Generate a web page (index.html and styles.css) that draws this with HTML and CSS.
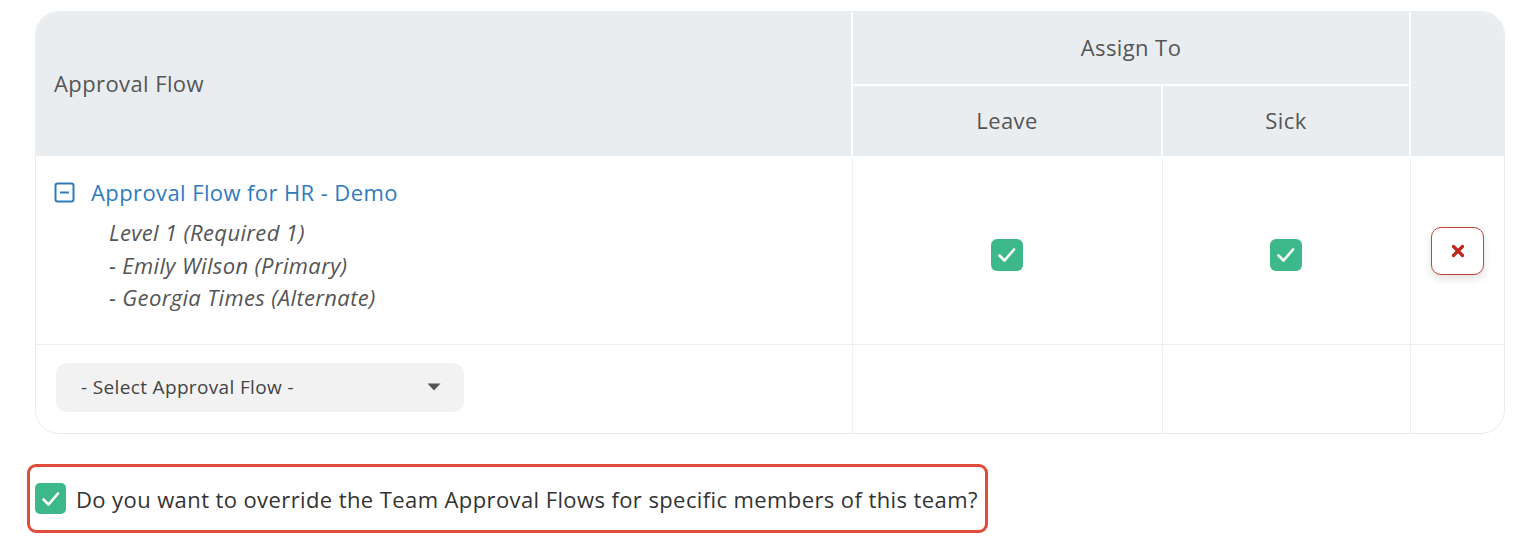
FILE: index.html
```html
<!DOCTYPE html>
<html>
<head>
<meta charset="utf-8">
<link rel="stylesheet" href="styles.css">
</head>
<body>
<div class="page">
  <div class="card">
    <table class="grid">
      <colgroup>
        <col class="c-flow">
        <col class="c-leave">
        <col class="c-sick">
        <col class="c-act">
      </colgroup>
      <thead>
        <tr class="h1">
          <th class="th-flow" rowspan="2">Approval Flow</th>
          <th class="th-assign" colspan="2">Assign To</th>
          <th class="th-act" rowspan="2"></th>
        </tr>
        <tr class="h2">
          <th class="th-leave">Leave</th>
          <th class="th-sick">Sick</th>
        </tr>
      </thead>
      <tbody>
        <tr class="row-flow">
          <td class="cell-flow">
            <div class="flow-title">
              <svg class="minus" width="21" height="21" viewBox="0 0 21 21"><rect x="1.5" y="1.5" width="18" height="18" rx="2" fill="none" stroke="#2f7bbf" stroke-width="2"/><line x1="6" y1="10.5" x2="15" y2="10.5" stroke="#2f7bbf" stroke-width="2"/></svg>
              <span class="flow-link">Approval Flow for HR - Demo</span>
            </div>
            <div class="flow-details">
              <div>Level 1 (Required 1)</div>
              <div>- Emily Wilson (Primary)</div>
              <div>- Georgia Times (Alternate)</div>
            </div>
          </td>
          <td class="cell-center"><span class="check"><svg width="24" height="24" viewBox="0 0 24 24"><path d="M4.5 12.5 L9.5 17.5 L19 6.5" fill="none" stroke="#fff" stroke-width="2.6" stroke-linecap="round" stroke-linejoin="round"/></svg></span></td>
          <td class="cell-center"><span class="check"><svg width="24" height="24" viewBox="0 0 24 24"><path d="M4.5 12.5 L9.5 17.5 L19 6.5" fill="none" stroke="#fff" stroke-width="2.6" stroke-linecap="round" stroke-linejoin="round"/></svg></span></td>
          <td class="cell-center"><button class="del"><svg width="14" height="14" viewBox="0 0 14 14"><path d="M2.5 2.5 L11.5 11.5 M11.5 2.5 L2.5 11.5" stroke="#c0281f" stroke-width="3.2" stroke-linecap="round"/></svg></button></td>
        </tr>
        <tr class="row-select">
          <td class="cell-select">
            <div class="select"><span>- Select Approval Flow -</span><svg width="14" height="8" viewBox="0 0 14 8"><path d="M0.5 0.5 L13.5 0.5 L7 7.5 Z" fill="#555"/></svg></div>
          </td>
          <td></td>
          <td></td>
          <td></td>
        </tr>
      </tbody>
    </table>
  </div>
  <div class="override">
    <span class="check small"><svg width="24" height="24" viewBox="0 0 24 24"><path d="M4.5 12.5 L9.5 17.5 L19 6.5" fill="none" stroke="#fff" stroke-width="2.6" stroke-linecap="round" stroke-linejoin="round"/></svg></span>
    <span class="override-text">Do you want to override the Team Approval Flows for specific members of this team?</span>
  </div>
</div>
</body>
</html>
```

FILE: styles.css
```css
html, body {
  margin: 0;
  padding: 0;
  background: #fff;
}
body {
  font-family: "Open Sans", "Noto Sans", sans-serif;
  color: #333;
  letter-spacing: 0.4px;
}
.page {
  padding: 11px 18px 0 35px;
}
.card {
  width: 1470px;
  border: 1px solid #e8ebee;
  border-radius: 24px;
  overflow: hidden;
  box-sizing: border-box;
}
.grid {
  width: 100%;
  border-collapse: collapse;
  table-layout: fixed;
}
.c-flow { width: 816px; }
.c-leave { width: 310px; }
.c-sick { width: 248px; }
.c-act { width: 94px; }
.grid th {
  background: #eaedf0;
  color: #555;
  font-weight: 400;
  font-size: 22px;
  padding: 0;
  border: 2px solid #fff;
}
.grid thead tr:first-child th { border-top: none; }
.grid th:first-child { border-left: none; }
.th-act { border-right: none !important; }
.th-flow {
  text-align: left;
  padding-left: 18px !important;
  padding-bottom: 3px !important;
}
.th-assign { padding-bottom: 3px !important; }
.th-leave, .th-sick { padding-bottom: 2px !important; }
.h1 { height: 73px; }
.h2 { height: 72px; }
.grid td {
  border: 1px solid #eceef1;
  padding: 0;
  vertical-align: middle;
}
.grid tbody tr:last-child td { border-bottom: none; }
.grid td:first-child { border-left: none; }
.grid td:last-child { border-right: none; }
.grid tbody tr:first-child td { border-top: none; }
.row-flow { height: 187px; }
.row-select { height: 89px; }
.cell-flow {
  padding: 18px 18px 27px 18px !important;
  vertical-align: top !important;
}
.flow-title {
  display: flex;
  align-items: center;
  gap: 16px;
  height: 32px;
}
.minus { flex: none; }
.flow-link {
  color: #2f7bbf;
  font-size: 22px;
}
.flow-details {
  padding-left: 55px;
  margin-top: 8px;
  font-style: italic;
  font-size: 22px;
  letter-spacing: 0.35px;
  line-height: 32.5px;
  color: #555;
}
.cell-center { text-align: center; }
.check {
  display: inline-flex;
  align-items: center;
  justify-content: center;
  width: 32px;
  height: 32px;
  border-radius: 6px;
  background: #3db88b;
  vertical-align: middle;
}
.row-flow .check { margin-top: 8px; }
.del {
  width: 53px;
  height: 48px;
  border: 1.5px solid #c9413a;
  border-radius: 10px;
  background: #fff;
  box-shadow: 0 4px 8px rgba(0,0,0,0.12);
  display: inline-flex;
  align-items: center;
  justify-content: center;
  padding: 0;
  margin-left: 1px;
  margin-top: 1px;
}
.cell-select { padding-left: 20px !important; padding-bottom: 3px !important; }
.select {
  width: 408px;
  height: 49px;
  box-sizing: border-box;
  background: #f2f2f2;
  border-radius: 10px;
  display: flex;
  align-items: center;
  justify-content: space-between;
  padding: 0 23px 0 25px;
  font-size: 19px;
  letter-spacing: 0.35px;
  color: #444;
}
.override {
  margin-top: 30px;
  margin-left: -8px;
  width: 961px;
  height: 69px;
  box-sizing: border-box;
  border: 3px solid #e04b3a;
  border-radius: 9px;
  display: flex;
  align-items: center;
  gap: 10px;
  padding-left: 5px;
}
.check.small {
  width: 31px;
  height: 31px;
  border-radius: 5px;
}
.override-text {
  font-size: 22px;
  color: #333;
}
```
